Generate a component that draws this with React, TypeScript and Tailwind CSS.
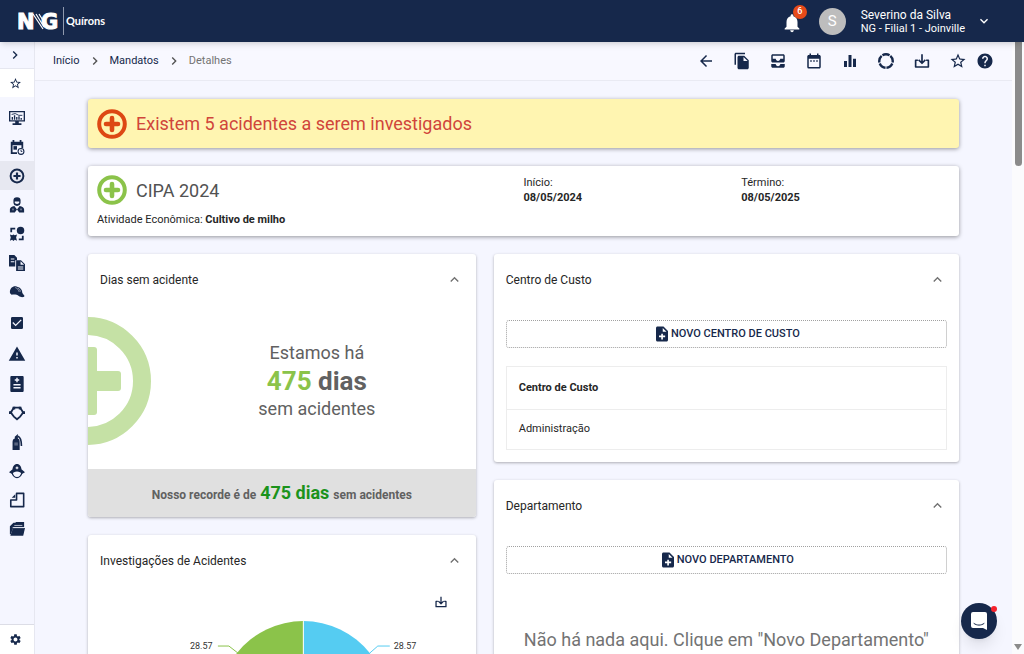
import { useState, type ReactNode } from "react";
import {
  MdAllInbox,
  MdArrowBack,
  MdCheckBox,
  MdChevronRight,
  MdDateRange,
  MdEqualizer,
  MdExpandLess,
  MdExpandMore,
  MdFileCopy,
  MdHelp,
  MdNotifications,
  MdSettings,
  MdStarBorder,
  MdWarning,
} from "react-icons/md";

function DownloadIcon({ className }: { className?: string }) {
  return (
    <svg viewBox="0 0 24 24" fill="none" stroke="currentColor" strokeWidth="2.2" strokeLinejoin="round" className={className}>
      <path d="M6.500 11H3.500v9h17v-9h-3" />
      <path d="M12 3v11M7.500 10.500L12 15l4.500-4.500" />
    </svg>
  );
}

function RingIcon({ className }: { className?: string }) {
  return (
    <svg viewBox="0 0 24 24" fill="none" stroke="currentColor" strokeWidth="3.2" className={className}>
      <circle cx="12" cy="12" r="9" pathLength="60" strokeDasharray="10.6 1.4" strokeDashoffset="-3.700" />
    </svg>
  );
}

function NoteAddIcon({ className }: { className?: string }) {
  return (
    <svg viewBox="0 0 24 24" fill="currentColor" className={className}>
      <path
        fillRule="evenodd"
        d="M14 2H6c-1.100 0-2 .9-2 2v16c0 1.100.9 2 2 2h12c1.100 0 2-.9 2-2V8l-6-6zm-1 2l5 5h-5V4zm-2 7.500h2.200V14h3v2.200h-3v3H11v-3H8V14h3z"
      />
    </svg>
  );
}

function PlusCircle({ className }: { className?: string }) {
  return (
    <svg viewBox="0 0 30 30" className={className}>
      <circle cx="15" cy="15" r="12.800" fill="none" stroke="currentColor" strokeWidth="4" />
      <path d="M15 9v12M9 15h12" stroke="currentColor" strokeWidth="4.600" strokeLinecap="round" />
    </svg>
  );
}

const menuIcons: Record<string, ReactNode> = {
  monitor: (
    <>
      <path fillRule="evenodd" d="M0 1h18v12h-7v2h3v2H4v-2h3v-2H0V1zm1.500 1.500v9h15v-9h-15z" />
      <path d="M3 8h1.500v3H3zM5.500 6H7v5H5.500zM8 8h1.500v3H8zM10.500 7H12v4h-1.500zM13 9h1.500v2H13z" />
      <path d="M3 5l4-1 4 2 4 0" fill="none" stroke="currentColor" />
    </>
  ),
  calendar: (
    <>
      <path fillRule="evenodd" d="M4 1h2v2h6V1h2v2h2v7h-2V7H4v8h5v2H2V3h2z" />
      <path d="M5 8h4v4H5z" />
      <circle cx="13.500" cy="14" r="3.300" fill="none" stroke="currentColor" strokeWidth="1.200" />
      <path d="M13.500 12v2h1.500" fill="none" stroke="currentColor" />
    </>
  ),
  cross: (
    <>
      <circle cx="9" cy="9" r="7.200" fill="none" stroke="currentColor" strokeWidth="2.200" />
      <path d="M9 5v8M5 9h8" stroke="currentColor" strokeWidth="2.400" />
    </>
  ),
  doctor: (
    <>
      <path d="M5 4a4 3.600 0 0 1 8 0v2a4 4 0 0 1-8 0z" />
      <path d="M6.500 5h5v1a2.500 2 0 0 1-5 0z" fill="#f5f6ff" />
      <path d="M6 10l3 4 3-4c3 .5 5 2 5 4v3.500h-5.500L9 14l-2.500 3.500H1V14c0-2 2-3.500 5-4z" />
      <path d="M4.500 13v2M13.500 13v2" stroke="#f5f6ff" strokeWidth="0.800" />
    </>
  ),
  flow: (
    <>
      <circle cx="13" cy="5" r="4.200" />
      <path d="M2.500 7V3H7M15.500 11v4H11" fill="none" stroke="currentColor" strokeWidth="2" />
      <path d="M1 9.500l2.500 1 1.500-1 1.500 1 2.500-1-1 3.500 1 3.500-2.500-1L5 17l-1.500-1.500-2.500 1 1-3.500z" />
    </>
  ),
  documents: (
    <>
      <path fillRule="evenodd" d="M0 0h6l3 3v3H7v7H0V0zm2 4v1.200h4V4H2zm0 3v1.200h4V7H2z" />
      <path fillRule="evenodd" d="M8 6h5.500L18 10.500V18H8V6zm5 1v4h4l-4-4zm-3 6v1.200h6V13h-6zm0 2.200v1.200h6v-1.200h-6z" />
    </>
  ),
  helmet: (
    <>
      <path d="M1 9c0-4.500 4-7.500 8-6 4 .8 6 3.500 6 7l2.500 3.500c-1 2-4.500 1.500-6.500 0-2-1.800-5-2-8-1.500C1.500 11 1 10.500 1 9z" />
      <path d="M7 4c3 1 4 3 4.500 5M10 4.500c1.500 1 2.500 2 3 4" fill="none" stroke="#f5f6ff" strokeWidth="0.600" />
    </>
  ),
  clipboard: (
    <path
      fillRule="evenodd"
      d="M3 0h12c1 0 1.500.5 1.500 1.500v15c0 1-.5 1.500-1.500 1.500H3c-1 0-1.500-.5-1.500-1.500v-15C1.500.5 2 0 3 0zm5.200 2v1.700H6.500v1.600h1.700V7h1.600V5.300h1.700V3.700H9.800V2zM5 9v1.700h8V9zm0 3.500v1.700h8v-1.700z"
    />
  ),
  hexagon: (
    <>
      <path d="M5.500 3h7L16 8.500 12.500 13 9 16l-3.500-3L2 8.500z" fill="none" stroke="currentColor" strokeWidth="2" />
      <path d="M4 2h3v3H4zM11 2h3v3h-3zM0 7h3.500v3H0zM14.500 7H18v3h-3.500z" />
    </>
  ),
  extinguisher: (
    <>
      <path d="M4 9c0-2.500 1-3.500 2.500-4V3L10 0v5c1.500.5 2 1.500 2 4v9H4z" />
      <path d="M10 2.500c3 1 4 5 4 11" fill="none" stroke="currentColor" strokeWidth="1.800" />
      <path d="M6 9.500h4v3.500H6z" fill="#f5f6ff" opacity="0.300" />
    </>
  ),
  worker: (
    <>
      <path d="M4 7c0-3 2-6 5-6s5 3 5 6l4 3.500-3.500 2c-1-2-3-3-5.500-3s-4.500 1-5.500 3L0 10.500z" />
      <path d="M3.500 10.500c.5 3.500 3 6 5.500 6s5-2.500 5.500-6" fill="none" stroke="currentColor" strokeWidth="1.400" />
      <path d="M9 4v3M7.500 5.500h3" stroke="#f5f6ff" strokeWidth="1.200" />
    </>
  ),
  page: (
    <>
      <path d="M8.500 1.500h8v15H2V9h6.500V1.500z" fill="none" stroke="currentColor" strokeWidth="1.800" strokeLinejoin="round" />
      <path d="M3 6.500l4-4v4z" />
    </>
  ),
  folder: (
    <>
      <path d="M1 6l4-4h2l1-1h9v6H5L2 15H1z" />
      <path d="M4.500 8H18l-2 8.500H1.500z" />
      <path d="M6 5h9M4 7.500h13" stroke="#f5f6ff" strokeWidth="0.800" />
    </>
  ),
};

const menu = [
  { label: "Painel", icon: "monitor" },
  { label: "Agenda", icon: "calendar" },
  { label: "CIPA", icon: "cross", active: true },
  { label: "Medicina", icon: "doctor" },
  { label: "Processos", icon: "flow" },
  { label: "Documentos", icon: "documents" },
  { label: "EPI", icon: "helmet" },
  { label: "Tarefas", icon: "check" },
  { label: "Riscos", icon: "warning" },
  { label: "Laudos", icon: "clipboard" },
  { label: "Produtos", icon: "hexagon" },
  { label: "Extintores", icon: "extinguisher" },
  { label: "Brigada", icon: "worker" },
  { label: "Relatórios", icon: "page" },
  { label: "Arquivos", icon: "folder" },
];

function MenuIcon({ name }: { name: string }) {
  if (name === "check") return <MdCheckBox className="size-4" />;
  if (name === "warning") return <MdWarning className="size-[18px]" />;
  return (
    <svg viewBox="0 0 18 18" fill="currentColor" className="size-4">
      {menuIcons[name]}
    </svg>
  );
}

function Sidebar() {
  return (
    <nav className="flex w-[35px] shrink-0 flex-col border-r border-[#e6e7f0] bg-[#f5f6ff] text-[#16284b]">
      <button type="button" aria-label="Expandir menu" className="flex h-[27px] items-center border-b border-[#e6e7f0] pl-[7px]">
        <MdChevronRight className="size-4" />
      </button>
      <button type="button" aria-label="Favoritos" className="mb-[6px] flex h-7 items-center bg-white pl-[9px]">
        <MdStarBorder className="size-[13px]" />
      </button>
      {menu.map((item) => (
        <button
          key={item.label}
          type="button"
          aria-label={item.label}
          className={`flex shrink-0 items-center justify-center ${item.active ? "bg-[#e7e8f1]" : ""} ${
            item.icon === "check" ? "h-[33px]" : item.icon === "warning" ? "h-[30px]" : "h-[29px]"
          }`}
        >
          <MenuIcon name={item.icon} />
        </button>
      ))}
      <button type="button" aria-label="Configurações" className="mt-auto flex h-[30px] items-center border-t border-[#dcdde6] bg-white pl-[9px]">
        <MdSettings className="size-[13px]" />
      </button>
    </nav>
  );
}

function Header() {
  return (
    <header className="relative z-10 flex h-[42px] shrink-0 items-center bg-[#16284b] pl-[18px] pr-8 text-white shadow-md">
      <svg viewBox="0 0 46 28" fill="#ffffff" className="h-7 w-[46px]">
        <text x="-1" y="22" stroke="#ffffff" className="font-['DejaVu_Sans'] text-[21px] font-bold">
          N
        </text>
        <text x="23" y="22" stroke="#ffffff" className="font-['DejaVu_Sans'] text-[21px] font-bold">
          G
        </text>
        <path d="M15 7l10 15M18 7l8 13M21 7l5 8" stroke="#ffffff" strokeWidth="1.200" />
        <path d="M45.500 0v28" stroke="#8f99ad" />
      </svg>
      <span className="pl-[2px] font-['Lato'] text-[11px] font-bold">Quírons</span>
      <div className="ml-auto flex items-center">
        <button type="button" aria-label="Notificações" className="relative mr-4 pt-[3px]">
          <MdNotifications className="size-[22px]" />
          <span className="absolute -top-1 left-3 flex size-[14px] items-center justify-center rounded-full bg-[#e64a19] text-[9px] font-medium">
            6
          </span>
        </button>
        <span className="mr-[15px] flex size-[27px] items-center justify-center rounded-full bg-[#bdbdbd] text-[15px]">S</span>
        <div className="mr-[11px] flex flex-col">
          <span className="text-[12px] leading-[14px]">Severino da Silva</span>
          <span className="text-[11px] leading-[13px]">NG - Filial 1 - Joinville</span>
        </div>
        <button type="button" aria-label="Menu do usuário">
          <MdExpandMore className="size-4" />
        </button>
      </div>
    </header>
  );
}

const actions = [
  { label: "Voltar", icon: <MdArrowBack className="size-[18px]" /> },
  { label: "Duplicar", icon: <MdFileCopy className="size-[18px]" /> },
  { label: "Caixa de entrada", icon: <MdAllInbox className="size-[18px]" /> },
  { label: "Calendário", icon: <MdDateRange className="size-[18px]" /> },
  { label: "Gráficos", icon: <MdEqualizer className="size-[18px]" /> },
  { label: "Ciclo", icon: <RingIcon className="size-[18px]" /> },
  { label: "Baixar", icon: <DownloadIcon className="size-[18px]" /> },
];

function Toolbar() {
  return (
    <div className="flex h-[39px] items-center border-b border-[#e9eaf3] bg-[#f8f8ff] px-[18px] text-[#16284b]">
      <div className="flex items-center gap-[7px] text-[11px]">
        <a href="#inicio">Início</a>
        <MdChevronRight className="size-4 text-neutral-600" />
        <a href="#mandatos">Mandatos</a>
        <MdChevronRight className="size-4 text-neutral-600" />
        <span className="text-neutral-500">Detalhes</span>
      </div>
      <div className="ml-auto flex items-center gap-[18px]">
        {actions.map((action) => (
          <button key={action.label} type="button" aria-label={action.label}>
            {action.icon}
          </button>
        ))}
        <div className="flex items-center gap-[9px]">
          <button type="button" aria-label="Favoritar">
            <MdStarBorder className="size-[18px]" />
          </button>
          <button type="button" aria-label="Ajuda">
            <MdHelp className="size-[18px]" />
          </button>
        </div>
      </div>
    </div>
  );
}

function Panel({ title, children }: { title: string; children: ReactNode }) {
  const [open, setOpen] = useState(true);

  return (
    <section className="overflow-hidden rounded-[3px] bg-white shadow-[0_1px_3px_rgba(0,0,0,0.3)]">
      <button
        type="button"
        aria-expanded={open}
        onClick={() => setOpen(!open)}
        className="flex h-[51px] w-full items-center justify-between px-3 text-[12px] text-neutral-800"
      >
        {title}
        <MdExpandLess className={`mr-px size-[17px] text-neutral-500 ${open ? "" : "rotate-180"}`} />
      </button>
      {open && children}
    </section>
  );
}

function AddButton({ children }: { children: ReactNode }) {
  return (
    <button
      type="button"
      className="flex h-7 w-full items-center justify-center rounded-[3px] border border-dotted border-neutral-400 text-[11px] font-medium text-[#16284b]"
    >
      <NoteAddIcon className="size-[18px]" />
      {children}
    </button>
  );
}

function AccidentsChart() {
  return (
    <svg viewBox="0 0 388 200" className="mx-auto h-[200px] w-[388px] max-w-full">
      <path d="M215.500 97V12A85 85 0 0 1 298.400 115.900z" fill="#55ccf2" />
      <path d="M215.500 97V12A85 85 0 0 0 132.600 115.900z" fill="#8bc34a" />
      <path d="M215.500 12v85" stroke="#ffffff" />
      <path d="M282 44l8-7h12" fill="none" stroke="#55ccf2" />
      <path d="M150 44l-9-7h-11" fill="none" stroke="#8bc34a" />
      <text x="102" y="40" fill="#333333" className="text-[9px]">
        28.57
      </text>
      <text x="306" y="40" fill="#333333" className="text-[9px]">
        28.57
      </text>
    </svg>
  );
}

export default function App() {
  return (
    <div className="flex h-screen flex-col overflow-hidden bg-[#f5f6ff] font-['Roboto',sans-serif] text-neutral-800">
      <Header />
      <div className="flex min-h-0 flex-1">
        <Sidebar />
        <div className="flex min-w-0 flex-1 flex-col">
          <Toolbar />
          <main className="flex min-h-0 flex-1 flex-col gap-[18px] overflow-hidden px-[53px] pt-[18px]">
            <div className="flex h-[49px] shrink-0 items-center gap-[9px] rounded-[3px] bg-[#fff5b1] px-[9px] text-[#d0453b] shadow-[0_1px_4px_rgba(0,0,0,0.4)]">
              <PlusCircle className="size-[30px] text-[#dd4814]" />
              <h2 className="text-[18px]">Existem 5 acidentes a serem investigados</h2>
            </div>

            <div className="grid shrink-0 grid-cols-4 rounded-[3px] bg-white py-[9px] text-[11px] leading-[15px] shadow-[0_1px_4px_rgba(0,0,0,0.4)]">
              <div className="col-span-2 pl-[9px]">
                <div className="mb-[7px] flex items-center gap-[9px]">
                  <PlusCircle className="size-[30px] text-[#8bc34a]" />
                  <h1 className="text-[18px] text-neutral-600">CIPA 2024</h1>
                </div>
                <p>
                  Atividade Econômica: <strong>Cultivo de milho</strong>
                </p>
              </div>
              <p>
                Início:
                <strong className="block">08/05/2024</strong>
              </p>
              <p>
                Término:
                <strong className="block">08/05/2025</strong>
              </p>
            </div>

            <div className="grid grid-cols-[5fr_6fr] items-start gap-[18px]">
              <div className="flex flex-col gap-[18px]">
                <Panel title="Dias sem acidente">
                  <div className="flex h-[164px] items-center pb-3">
                    <svg viewBox="0 0 64 128" className="h-32 w-16 shrink-0 text-[#c5e1a5]">
                      <circle cx="-1" cy="64" r="55" fill="none" stroke="currentColor" strokeWidth="18" />
                      <rect x="-11" y="30" width="20" height="68" rx="3" fill="currentColor" />
                      <rect x="-35" y="54" width="68" height="20" rx="3" fill="currentColor" />
                    </svg>
                    <p className="flex-1 pl-[6px] text-center text-[18px] leading-7 text-[#616161]">
                      Estamos há
                      <strong className="block text-[26px]">
                        <span className="text-[#8bc34a]">475</span> dias
                      </strong>
                      sem acidentes
                    </p>
                  </div>
                  <p className="flex h-12 items-baseline justify-center gap-1 bg-[#e0e0e0] pt-[10px] text-[12px] font-bold text-[#616161]">
                    Nosso recorde é de <span className="text-[18px] text-[#1b931b]">475 dias</span> sem acidentes
                  </p>
                </Panel>

                <Panel title="Investigações de Acidentes">
                  <div className="flex justify-end pr-7 pt-[9px] text-[#16284b]">
                    <button type="button" aria-label="Baixar gráfico">
                      <DownloadIcon className="size-[14px]" />
                    </button>
                  </div>
                  <AccidentsChart />
                </Panel>
              </div>

              <div className="flex flex-col gap-[18px]">
                <Panel title="Centro de Custo">
                  <div className="flex flex-col gap-[18px] px-3 pb-3 pt-[15px]">
                    <AddButton>NOVO CENTRO DE CUSTO</AddButton>
                    <table className="w-full border border-[#ededed] text-left text-[11px]">
                      <thead>
                        <tr className="h-[43px] border-b border-[#ededed]">
                          <th className="px-3 font-bold">Centro de Custo</th>
                        </tr>
                      </thead>
                      <tbody>
                        <tr className="h-10">
                          <td className="px-3">Administração</td>
                        </tr>
                      </tbody>
                    </table>
                  </div>
                </Panel>

                <Panel title="Departamento">
                  <div className="px-3 pb-12 pt-[15px]">
                    <AddButton>NOVO DEPARTAMENTO</AddButton>
                    <p className="pt-[52px] text-center text-[18px] leading-7 text-neutral-500">
                      Não há nada aqui. Clique em "Novo Departamento"
                    </p>
                  </div>
                </Panel>
              </div>
            </div>
          </main>
        </div>
        <div aria-hidden="true" className="flex w-3 shrink-0 flex-col items-center justify-between bg-[#fbfbfd] pb-1">
          <div className="h-[124px] w-[7px] rounded-b-full bg-[#8b8b8b]" />
          <svg viewBox="0 0 8 6" className="h-[6px] w-2">
            <path d="M0 0h8L4 6z" fill="#8b8b8b" />
          </svg>
        </div>
      </div>

      <button
        type="button"
        aria-label="Abrir chat"
        className="fixed bottom-[15px] right-[27px] z-20 flex size-9 items-center justify-center rounded-full bg-[#16284b] shadow-lg"
      >
        <svg viewBox="0 0 18 20" className="h-5 w-[18px]">
          <path d="M3 1h12a2 2 0 0 1 2 2v16l-4-2H3a2 2 0 0 1-2-2V3a2 2 0 0 1 2-2z" fill="#ffffff" />
          <path d="M4 12.500c3 2.200 7 2.200 10 0" fill="none" stroke="#16284b" strokeLinecap="round" />
        </svg>
        <span className="absolute right-0 top-[3px] size-[6px] rounded-full bg-[#f5222d]" />
      </button>
    </div>
  );
}
